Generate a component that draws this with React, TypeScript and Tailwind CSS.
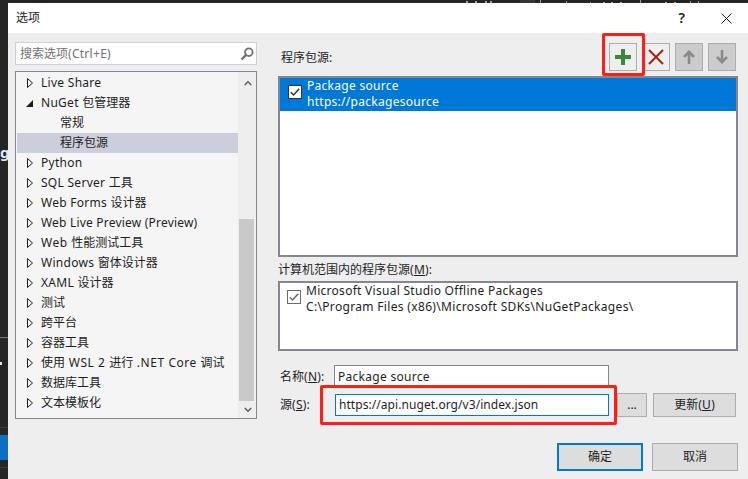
import React from "react";

const font = { fontFamily: '"Noto Sans", "Noto Sans CJK SC", sans-serif' };

function T({ children, track = "tracking-[0.28px]" }: { children: string; track?: string }) {
  const parts = children.split(/([\u3000-\u9fff]+)/).filter(Boolean);
  return (
    <>
      {parts.map((p, i) =>
        /[\u3000-\u9fff]/.test(p) ? (
          <span key={i}>{p}</span>
        ) : (
          <span key={i} className={track}>{p}</span>
        ),
      )}
    </>
  );
}

function Collapsed() {
  return (
    <svg width="6" height="10" viewBox="0 0 6 10" className="block">
      <path d="M0.5 0.5 L5.5 5 L0.5 9.5 Z" fill="none" stroke="#1e1e1e" strokeWidth="1" />
    </svg>
  );
}

function Expanded() {
  return (
    <svg width="7" height="7" viewBox="0 0 7 7" className="block">
      <path d="M7 0 L7 7 L0 7 Z" fill="#1e1e1e" />
    </svg>
  );
}

type Row = { t: string; kind: "c" | "e" | "l"; sel?: boolean; track?: string };

const rows: Row[] = [
  { t: "Live Share", kind: "c" },
  { t: "NuGet 包管理器", kind: "e" },
  { t: "常规", kind: "l" },
  { t: "程序包源", kind: "l", sel: true },
  { t: "Python", kind: "c" },
  { t: "SQL Server 工具", kind: "c" },
  { t: "Web Forms 设计器", kind: "c" },
  { t: "Web Live Preview (Preview)", kind: "c", track: "tracking-[0.2px]" },
  { t: "Web 性能测试工具", kind: "c", track: "tracking-[0.5px]" },
  { t: "Windows 窗体设计器", kind: "c" },
  { t: "XAML 设计器", kind: "c" },
  { t: "测试", kind: "c" },
  { t: "跨平台", kind: "c" },
  { t: "容器工具", kind: "c" },
  { t: "使用 WSL 2 进行 .NET Core 调试", kind: "c", track: "tracking-[0.55px]" },
  { t: "数据库工具", kind: "c" },
  { t: "文本模板化", kind: "c" },
];

function TreeRow({ r }: { r: Row }) {
  return (
    <div className={`flex h-5 items-center whitespace-nowrap text-[12px] text-[#1e1e1e] ${r.sel ? "bg-[#cccedb]" : ""}`}>
      {r.kind === "l" ? (
        <span className="pl-[43px]"><T>{r.t}</T></span>
      ) : (
        <>
          <span className="flex w-[24px] justify-end pr-[8px]">
            {r.kind === "c" ? <Collapsed /> : <Expanded />}
          </span>
          <span><T track={r.track}>{r.t}</T></span>
        </>
      )}
    </div>
  );
}

function Check({ color }: { color: string }) {
  return (
    <svg width="14" height="14" viewBox="0 0 14 14" className="block shrink-0">
      <rect x="0.5" y="0.5" width="13" height="13" fill="#fff" stroke={color} />
      <path d="M2.8 7.2 L5.6 10 L11.2 3.8" fill="none" stroke={color} strokeWidth="1.5" />
    </svg>
  );
}

function ToolButton({ children, disabled }: { children: React.ReactNode; disabled?: boolean }) {
  return (
    <div className={`flex h-[28px] w-[28px] items-center justify-center border border-[#acacac] ${disabled ? "bg-[#cccccc]" : "bg-[#eeeeee]"}`}>
      {children}
    </div>
  );
}

function Button({ children, cls }: { children: React.ReactNode; cls: string }) {
  return (
    <div className={`flex items-center justify-center bg-[#dddddd] text-[12px] text-[#1e1e1e] ${cls}`}>
      {children}
    </div>
  );
}

export default function App() {
  return (
    <div className="relative flex h-[479px] w-[748px] overflow-hidden bg-[#252526]" style={font}>
      <div className="flex w-[8px] shrink-0 flex-col">
        <div className="mt-[145px] text-[15px] font-bold leading-[14px] text-[#dfe6ee]">g</div>
        <div className="mt-[178px] h-px bg-[#77787a]" />
        <div className="mt-[24px] h-[3px] w-[2px] bg-[#dfe6ee]" />
        <div className="mt-[62px] h-px bg-[#3a3a3c]" />
        <div className="mt-[7px] h-[25px] bg-[#0a70c4]" />
        <div className="mt-[7px] h-px bg-[#3a3a3c]" />
      </div>
      <div className="flex min-w-0 flex-1 flex-col">
        <svg width="740" height="3" viewBox="8 0 740 3" className="block shrink-0">
          <path d="M466 1h2v2h-2zM475 1h2v2h-2zM485 1h2v2h-2zM490 1h2v2h-2zM540 0h1v3h-1zM566 1h1v2h-1zM590 2h1v1h-1zM603 2h2v1h-2zM611 2h2v1h-2zM620 2h2v1h-2zM640 0h1v3h-1zM665 2h2v1h-2zM674 2h2v1h-2zM690 1h1v2h-1zM698 1h1v2h-1z" fill="#9aa4ad" />
          <path d="M520 0h15v3h-15z" fill="#35353a" />
        </svg>
        <div className="flex h-[30px] shrink-0 items-center justify-between bg-white pl-[8px] pr-[16px] text-[12px] text-[#1e1e1e]">
          <span>选项</span>
          <div className="flex items-center gap-[36px]">
            <span className="text-[14px] font-semibold leading-none">?</span>
            <svg width="11" height="11" viewBox="0 0 11 11">
              <path d="M0.5 0.5 L10.5 10.5 M10.5 0.5 L0.5 10.5" stroke="#1e1e1e" strokeWidth="1" />
            </svg>
          </div>
        </div>
        <div className="flex min-h-0 flex-1 bg-[#eeeeee]">
          <div className="ml-[7px] mt-[9px] flex w-[242px] shrink-0 flex-col gap-[6px]">
            <div className="flex h-[23px] items-center justify-between border border-[#cccedb] bg-white pl-[4px] pr-[2px] text-[12px] text-[#717171]">
              <span><T>搜索选项(Ctrl+E)</T></span>
              <svg width="14" height="14" viewBox="0 0 14 14">
                <circle cx="8.8" cy="5.2" r="3.8" fill="none" stroke="#717171" strokeWidth="1.8" />
                <path d="M6 8 L1.5 12.5" stroke="#717171" strokeWidth="2.4" />
              </svg>
            </div>
            <div className="flex h-[348px] border border-[#828790] bg-[#f5f5f5] pl-px">
              <div className="w-[221px] pt-px">
                {rows.map((r) => (
                  <TreeRow key={r.t} r={r} />
                ))}
              </div>
              <div className="flex w-[18px] flex-col bg-[#eeeeee] pl-px">
                <div className="flex h-[17px] items-end justify-center pb-[3px]">
                  <svg width="8" height="6" viewBox="0 0 8 6">
                    <path d="M0.8 5 L4 1.8 L7.2 5" fill="none" stroke="#606060" strokeWidth="1.6" />
                  </svg>
                </div>
                <div className="mt-[130px] h-[182px] w-[15px] bg-[#c9c9c9]" />
                <div className="flex flex-1 items-center justify-center">
                  <svg width="8" height="6" viewBox="0 0 8 6">
                    <path d="M0.8 1 L4 4.2 L7.2 1" fill="none" stroke="#606060" strokeWidth="1.6" />
                  </svg>
                </div>
              </div>
            </div>
          </div>
          <div className="ml-[21px] flex w-[460px] shrink-0 flex-col pt-[10px]">
            <div className="flex h-[33px] items-start">
              <span className="mt-[6px] pl-[3px] text-[12px] text-[#1e1e1e]">程序包源:</span>
              <div className="ml-auto flex gap-[5px] pr-[2px]">
                <ToolButton>
                  <svg width="16" height="16" viewBox="0 0 16 16">
                    <path d="M6 0 H10 V6 H16 V10 H10 V16 H6 V10 H0 V6 H6 Z" fill="#388a34" />
                  </svg>
                </ToolButton>
                <ToolButton>
                  <svg width="16" height="16" viewBox="0 0 16 16">
                    <path d="M1 1 L15 15 M15 1 L1 15" stroke="#a1260d" strokeWidth="2" />
                  </svg>
                </ToolButton>
                <ToolButton disabled>
                  <svg width="12" height="14" viewBox="0 0 12 14">
                    <path d="M6 14 V2 M1 7 L6 1.8 L11 7" fill="none" stroke="#8a8a8a" strokeWidth="2.6" />
                  </svg>
                </ToolButton>
                <ToolButton disabled>
                  <svg width="12" height="14" viewBox="0 0 12 14">
                    <path d="M6 0 V12 M1 7 L6 12.2 L11 7" fill="none" stroke="#8a8a8a" strokeWidth="2.6" />
                  </svg>
                </ToolButton>
              </div>
            </div>
            <div className="h-[181px] border-2 border-[#828790] bg-white">
              <div className="flex h-[33px] items-start gap-[5px] bg-[#0078d7] pl-[8px] text-[12px] leading-[16px] text-white">
                <div className="mt-[7px]">
                  <Check color="#333333" />
                </div>
                <div>
                  <div><T>Package source</T></div>
                  <div><T>https://packagesource</T></div>
                </div>
              </div>
            </div>
            <div className="mt-[4px] flex h-[18px] items-center text-[12px] text-[#1e1e1e]">
              <span><T>计算机范围内的程序包源(</T><u><T>M</T></u>):</span>
            </div>
            <div className="mt-[2px] flex h-[70px] items-start gap-[5px] border-2 border-[#828790] bg-white pl-[7px] text-[12px] leading-[16px] text-[#1e1e1e]">
              <div className="mt-[7px]">
                <Check color="#6a6a6a" />
              </div>
              <div>
                <div><T>Microsoft Visual Studio Offline Packages</T></div>
                <div><T track="tracking-[0.33px]">C:\Program Files (x86)\Microsoft SDKs\NuGetPackages\</T></div>
              </div>
            </div>
            <div className="mt-[14px] flex h-[23px] items-center text-[12px] text-[#1e1e1e]">
              <span className="w-[56px] pl-[2px]"><T>名称(</T><u><T>N</T></u>):</span>
              <div className="flex h-[23px] w-[275px] items-center border border-[#828790] bg-white pl-[3px]"><T>Package source</T></div>
            </div>
            <div className="mt-[5px] flex h-[24px] items-center text-[12px] text-[#1e1e1e]">
              <span className="w-[57px] pl-[2px]"><T>源(</T><u><T>S</T></u>):</span>
              <div className="flex h-[22px] w-[274px] items-center border border-[#0078d7] bg-white pl-[3px]"><T track="tracking-[0.06px]">https://api.nuget.org/v3/index.json</T></div>
              <Button cls="ml-[8px] h-[24px] w-[30px] border border-[#acacac]">...</Button>
              <Button cls="ml-[6px] h-[24px] w-[83px] border border-[#acacac]">
                <span><T>更新(</T><u><T>U</T></u>)</span>
              </Button>
            </div>
            <div className="mt-[26px] flex gap-[9px] pl-[279px]">
              <Button cls="h-[28px] w-[86px] border-2 border-[#0078d7]">确定</Button>
              <Button cls="h-[28px] w-[86px] border border-[#acacac]">取消</Button>
            </div>
          </div>
        </div>
      </div>
      <div className="absolute left-[602px] top-[33px] h-[43px] w-[43px] rounded-[2px] border-[3px] border-[#fb1f16]" />
      <div className="absolute left-[320px] top-[385px] h-[40px] w-[297px] rounded-[2px] border-[3px] border-[#fb1f16]" />
    </div>
  );
}
